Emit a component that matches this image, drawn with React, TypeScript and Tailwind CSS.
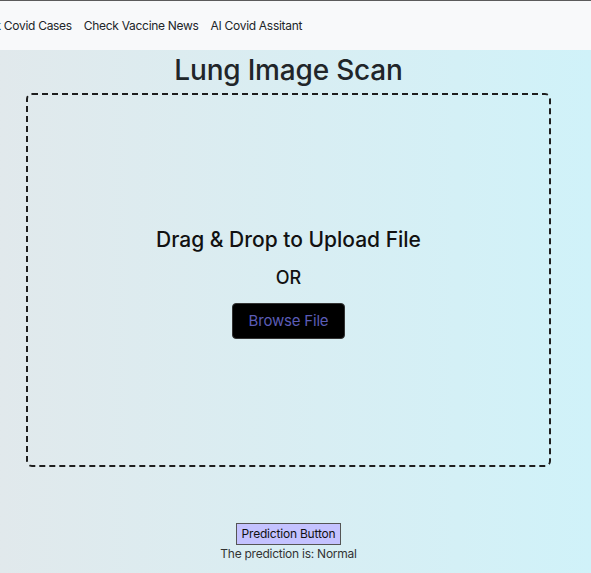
import React from "react";

export default function App() {
  return (
    <div
      className="min-h-[573px] w-full overflow-hidden bg-gradient-to-r from-[#e1e9ec] to-[#d0f2f9] text-[#212529]"
      style={{ fontFamily: "Inter, 'Noto Sans', sans-serif" }}
    >
      <nav className="flex h-[50px] items-center border-t border-[#5b5b5b] bg-[#f8f9fa] text-[12px] tracking-[-0.3px] text-[#212529]">
        <div className="-ml-[34px] flex items-center gap-[12px] whitespace-nowrap">
          <span>Check Covid Cases</span>
          <span>Check Vaccine News</span>
          <span>AI Covid Assitant</span>
        </div>
      </nav>
      <div className="flex w-[577px] flex-col items-center">
        <h1 className="mt-[3px] text-center text-[28px] font-medium leading-[34px] tracking-[-0.2px] text-[#212529]">
          Lung Image Scan
        </h1>
        <div className="mt-[6px] flex h-[374px] w-[525px] flex-col items-center justify-center rounded-[6px] border-2 border-dashed border-[#1e1e1e] pt-[7px]">
          <div className="text-[21px] font-medium leading-[24px] text-[#111]">
            Drag &amp; Drop to Upload File
          </div>
          <div className="mt-[15px] text-[18px] font-medium leading-[22px] text-[#111]">OR</div>
          <button className="mt-[14px] h-[36px] w-[113px] rounded-[4px] border border-[#333] bg-black text-[15px] tracking-[-0.2px] text-[#5b5cb6]">
            Browse File
          </button>
        </div>
        <div className="mt-[56px] flex flex-col items-center">
          <button className="h-[22px] whitespace-nowrap border-[1.5px] border-[#555] bg-[#c4c2ff] px-[5px] text-[12px] leading-[18px] tracking-[-0.2px] text-[#111]">
            Prediction Button
          </button>
          <div className="mt-[1px] whitespace-nowrap text-[12px] leading-[16px] tracking-[-0.25px] text-[#333]">
            The prediction is: Normal
          </div>
        </div>
      </div>
    </div>
  );
}
